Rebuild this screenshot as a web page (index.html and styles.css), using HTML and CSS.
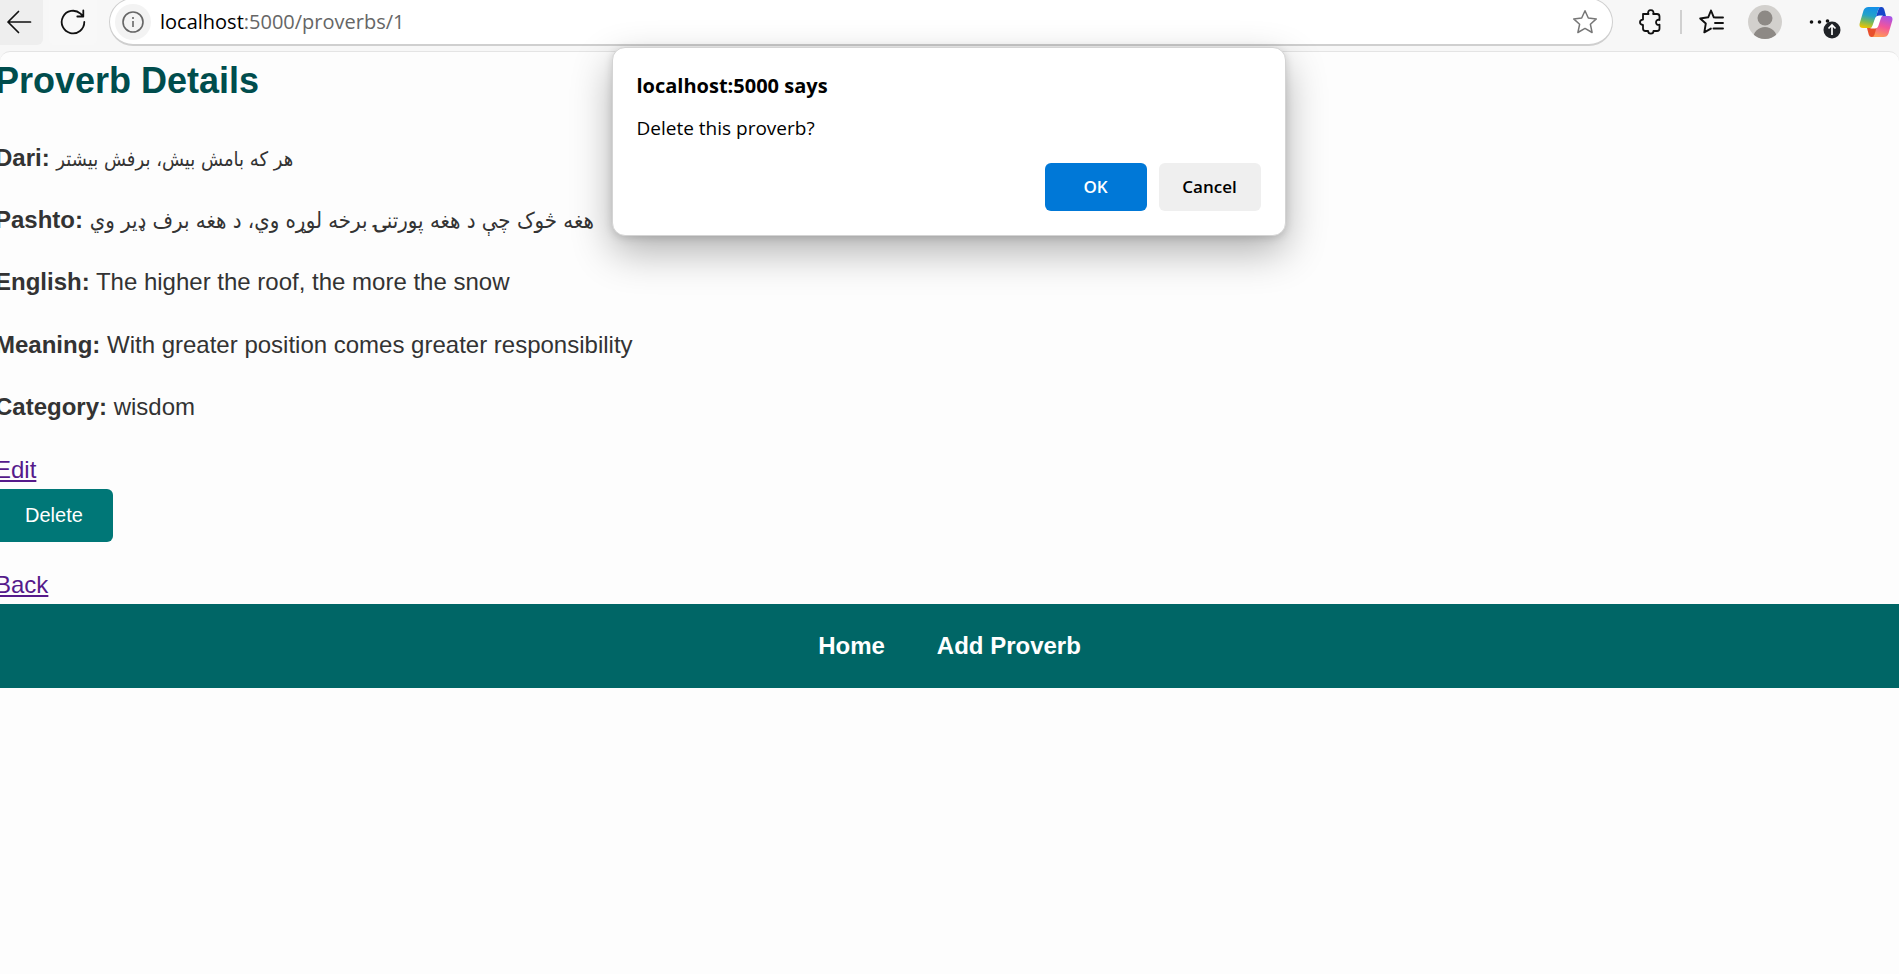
FILE: index.html
```html
<!DOCTYPE html>
<html lang="en">
<head>
<meta charset="utf-8">
<title>Proverb Details</title>
<link rel="stylesheet" href="styles.css">
</head>
<body>
<header class="toolbar">
  <button class="tool back" type="button" aria-label="Back">
    <svg width="26" height="26" viewBox="0 0 26 26" fill="none" stroke="#111" stroke-width="1.7" stroke-linecap="round" stroke-linejoin="round"><path d="M24.5 13H2M12.500 2.500L2 13l10.500 10.500"/></svg>
  </button>
  <button class="tool reload" type="button" aria-label="Reload">
    <svg width="26" height="26" viewBox="0 0 26 26" fill="none" stroke="#111" stroke-width="1.8" stroke-linecap="round" stroke-linejoin="round"><path d="M24.300 13A11.300 11.300 0 1 1 20.500 4.600L23 7.200M23.300 1.500v6h-6"/></svg>
  </button>
  <div class="address">
    <button class="info" type="button" aria-label="Site information">
      <svg width="22" height="22" viewBox="0 0 22 22" fill="none" stroke="#666" stroke-width="1.6"><circle cx="11" cy="11" r="10"/><path d="M11 10v6M11 6v2"/></svg>
    </button>
    <span class="url"><span class="host">localhost</span>:5000/proverbs/1</span>
    <button class="star" type="button" aria-label="Add to favorites">
      <svg width="26" height="26" viewBox="0 0 26 26" fill="none" stroke="#777" stroke-width="1.5" stroke-linejoin="round"><path d="M13 1.800L16.300 9l8 .9-5.900 5.400 1.700 8.200L13 19.400l-7.100 4.100 1.700-8.200L1.700 9.900l8-.9z"/></svg>
    </button>
  </div>
  <div class="tools">
    <button class="icon" type="button" aria-label="Extensions">
      <svg width="24" height="26" viewBox="0 0 24 26" fill="none" stroke="#111" stroke-width="1.8" stroke-linejoin="round"><path d="M4 5h5.500C8.300 2.800 9.800 1.200 11.800 1.200s3.500 1.600 2.300 3.800H18q2.500 0 2.500 2.500V11c-2-.8-3.500.5-3.500 2.300s1.500 3.100 3.500 2.300v3.900q0 2.500-2.500 2.500h-3.500c0 1.700-1 2.700-2.700 2.700S9.100 23.700 9.100 22H6.500Q4 22 4 19.500V16c-2 0-3-1.200-3-2.700s1-2.700 3-2.700z"/></svg>
    </button>
    <span class="divider"></span>
    <button class="icon" type="button" aria-label="Favorites">
      <svg width="25" height="26" viewBox="0 0 25 26" fill="none" stroke="#111" stroke-width="1.900" stroke-linecap="round" stroke-linejoin="round"><path d="M16.500 8.500l-1.700-.2L12 1.500 9.200 8.300 1.200 9.500l5.600 5-1.500 8.800 6.600-3.700M16.500 8.500h7.500M16 14h8M14.500 19.500h9.500"/></svg>
    </button>
    <button class="icon" type="button" aria-label="Profile">
      <svg width="34" height="34" viewBox="0 0 34 34"><defs><clipPath id="av"><circle cx="17" cy="17" r="17"/></clipPath></defs><g clip-path="url(#av)"><rect width="34" height="34" fill="#d2d0cd"/><circle cx="17" cy="13" r="7.500" fill="#8d8985"/><circle cx="17" cy="34" r="12" fill="#8d8985"/></g></svg>
    </button>
    <button class="icon more" type="button" aria-label="Settings and more">
      <svg width="32" height="36" viewBox="0 0 32 36"><g fill="#111"><circle cx="2.500" cy="18" r="1.800"/><circle cx="10.500" cy="18" r="1.800"/><circle cx="18.500" cy="17" r="1.800"/></g><circle cx="23" cy="26" r="8.500" fill="#202327"/><path d="M23 31V21.500M19.500 24.500l3.500-3.500 3.500 3.500" fill="none" stroke="#fff" stroke-width="1.700"/></svg>
    </button>
    <button class="icon copilot" type="button" aria-label="Copilot">
      <svg width="34" height="32" viewBox="0 0 34 32">
        <defs>
          <linearGradient id="c1" x1="0.500" y1="0" x2="0.300" y2="1"><stop offset="0" stop-color="#1490e8"/><stop offset=".4" stop-color="#24a2c8"/><stop offset=".7" stop-color="#7cb957"/><stop offset="1" stop-color="#efc400"/></linearGradient>
          <linearGradient id="c2" x1="0.700" y1="0" x2="0.400" y2="1"><stop offset="0" stop-color="#a653e8"/><stop offset=".5" stop-color="#f2559b"/><stop offset="1" stop-color="#ff9a55"/></linearGradient>
        </defs>
        <path d="M9.500 1h12q-2 1-2.800 4L14.500 19q-1 3-4 3H4q-4.500 0-3.200-5L4.500 4.500Q5.700 1 9.500 1z" fill="url(#c1)"/>
        <path d="M24.500 31h-12q2-1 2.800-4l4.200-14q1-3 4-3H30q4.500 0 3.200 5l-3.700 12.500q-1.200 3.500-5 3.500z" fill="url(#c2)"/>
        <path d="M20 1h2.500q2 0 2.700 2.200L27 10h-7q-2.500 0-3.500 2L19 4.500Q19.800 1.500 21.500 1z" fill="#1747c9"/>
        <path d="M8 22h3q2.500 0 4-2h3l-2.500 8.500Q14.500 31 13 31h-.5q-2 0-2.700-2.200z" fill="#e8502c"/>
        <path d="M20.500 9.500H24q-1.500.5-2.200 3L19.500 19.500q-.9 3-3.500 3h-5q1.700-.5 2.500-3L16 12.500q1-3 4.500-3z" fill="#fff"/>
      </svg>
    </button>
  </div>
</header>

<main class="viewport">
  <div class="page">
    <h2 class="title">Proverb Details</h2>
    <p class="row"><strong>Dari:</strong> <span class="dari" lang="fa">هر که بامش بیش، برفش بیشتر</span></p>
    <p class="row"><strong>Pashto:</strong> <span class="pashto" lang="ps">هغه څوک چې د هغه پورتنۍ برخه لوړه وي، د هغه برف ډیر وي</span></p>
    <p class="row"><strong>English:</strong> The higher the roof, the more the snow</p>
    <p class="row"><strong>Meaning:</strong> With greater position comes greater responsibility</p>
    <p class="row"><strong>Category:</strong> wisdom</p>
    <a class="link" href="#edit">Edit</a>
    <form class="delete-form"><button class="delete" type="button">Delete</button></form>
    <a class="link" href="#back">Back</a>
    <nav class="nav">
      <a href="#home">Home</a>
      <a href="#add">Add Proverb</a>
    </nav>
  </div>
</main>

<div class="dialog" role="dialog" aria-labelledby="dialog-title">
  <h1 class="dialog-title" id="dialog-title">localhost:5000 says</h1>
  <p class="dialog-text">Delete this proverb?</p>
  <div class="dialog-actions">
    <button class="action primary" type="button">OK</button>
    <button class="action" type="button">Cancel</button>
  </div>
</div>
</body>
</html>
```

FILE: styles.css
```css
* {
  box-sizing: border-box;
}

body {
  margin: 0;
  min-height: 100vh;
  overflow: hidden;
  display: flex;
  flex-direction: column;
  background: #f7f7f7;
  color: #333;
  font: 24px/1.6 "Liberation Sans", Arial, sans-serif;
}

button {
  margin: 0;
  padding: 0;
  border: 0;
  background: none;
  font: inherit;
  color: inherit;
}

svg {
  display: block;
}

.toolbar {
  display: flex;
  align-items: flex-start;
  height: 51px;
  font-family: "Open Sans", "Noto Sans", sans-serif;
}

.tool {
  display: grid;
  place-items: center;
  height: 45px;
  border-radius: 0 0 6px 6px;
}

.back {
  width: 43px;
  padding-right: 5px;
  padding-bottom: 2px;
  border-radius: 0 0 6px 0;
  background: #eee;
}

.reload {
  width: 48px;
  margin-left: 6px;
  padding-bottom: 1px;
  background: #f8f8f8;
}

.address {
  display: flex;
  flex: 1;
  align-items: center;
  height: 48px;
  margin: -2px 0 0 12px;
  padding: 0 14px 0 5px;
  border: 1px solid #cfcfcf;
  border-bottom-width: 2px;
  border-radius: 24px;
  background: #fff;
}

.info {
  display: grid;
  place-items: center;
  width: 36px;
  height: 36px;
  border-radius: 50%;
  background: #f3f3f3;
}

.url {
  flex: 1;
  margin-left: 9px;
  color: #666;
  font-size: 20px;
  line-height: 28px;
}

.host {
  color: #000;
}

.tools {
  display: flex;
  align-items: center;
  height: 44px;
  padding-left: 26px;
  padding-right: 6px;
}

.divider {
  width: 2px;
  height: 24px;
  margin: 0 17px;
  background: #d0d0d0;
}

.icon + .icon {
  margin-left: 24px;
}

.icon + .more {
  margin-left: 27px;
}

.icon + .copilot {
  margin-left: 18px;
}

.viewport {
  flex: 1;
  overflow: hidden;
  border-top: 1px solid #e4e4e4;
  border-radius: 10px 10px 0 0;
  background: #fdfdfd;
}

.page {
  display: flex;
  flex-direction: column;
  align-items: flex-start;
  margin: 0 -5px;
}

.title {
  margin: 0 0 29px;
  color: #004d4d;
  font-size: 36px;
}

.row {
  margin: 0 0 24px;
}

.dari,
.pashto {
  font-family: "DejaVu Sans Condensed", "DejaVu Sans", sans-serif;
  font-size: 20px;
  line-height: 24px;
}

.pashto {
  font-size: 22px;
}

.link {
  color: #551a8b;
}

.delete-form {
  margin: 0 0 24px;
}

.delete {
  display: block;
  padding: 15px 30px;
  border-radius: 6px;
  background: #007777;
  color: #fff;
  font-size: 20px;
  line-height: 23px;
}

.nav {
  display: flex;
  justify-content: center;
  gap: 52px;
  align-self: stretch;
  padding: 23px 0 22px;
  background: #006666;
  font-weight: bold;
}

.nav a {
  color: #fff;
  text-decoration: none;
}

.dialog {
  position: absolute;
  top: 47px;
  left: 50%;
  width: 674px;
  margin-left: -338px;
  padding: 24px;
  border: 1px solid #d4d4d4;
  border-radius: 13px;
  background: #fff;
  box-shadow: 0 16px 40px rgba(0, 0, 0, .3), 0 2px 8px rgba(0, 0, 0, .15);
  color: #000;
  font-family: "Open Sans", "Noto Sans", sans-serif;
}

.dialog-title {
  margin: 0 0 14px;
  font-size: 20px;
  font-weight: 700;
  line-height: 28px;
}

.dialog-text {
  margin: 0 0 21px;
  font-size: 19px;
  line-height: 28px;
}

.dialog-actions {
  display: flex;
  justify-content: flex-end;
  gap: 12px;
}

.action {
  width: 102px;
  height: 48px;
  border-radius: 6px;
  background: #efefef;
  font-size: 17px;
  font-weight: 600;
}

.primary {
  background: #0078d7;
  color: #fff;
}
```
